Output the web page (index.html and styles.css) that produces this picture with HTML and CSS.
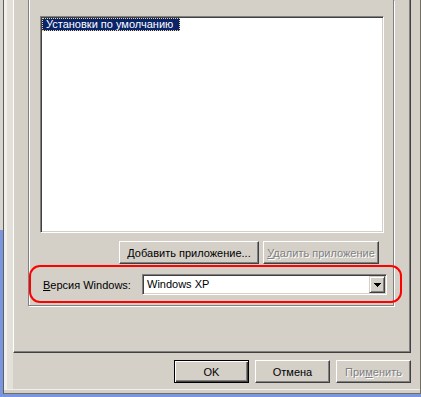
FILE: index.html
```html
<!DOCTYPE html>
<html lang="ru">
<head>
    <meta charset="UTF-8">
    <title>Совместимость</title>
    <link rel="stylesheet" href="styles.css">
</head>
<body>
    <div class="window">
        <div class="tab-page">
            <div class="group">
                <div class="listbox">
                    <div class="list-item selected">Установки по умолчанию</div>
                </div>

                <div class="list-actions">
                    <button class="btn btn-add"><u>Д</u>обавить приложение...</button>
                    <button class="btn btn-remove" disabled><u>У</u>далить приложение</button>
                </div>

                <div class="version-row">
                    <label class="version-label" for="winver"><u>В</u>ерсия Windows:</label>
                    <div class="combo" id="winver">
                        <span class="combo-text">Windows XP</span>
                        <span class="combo-button">
                            <svg width="7" height="4" viewBox="0 0 7 4" shape-rendering="crispEdges">
                                <path d="M0 0h7v1H0z M1 1h5v1H1z M2 2h3v1H2z M3 3h1v1H3z" fill="#000"/>
                            </svg>
                        </span>
                    </div>
                    <div class="highlight-ring"></div>
                </div>
            </div>
        </div>

        <div class="dialog-buttons">
            <button class="btn btn-default">OK</button>
            <button class="btn">Отмена</button>
            <button class="btn" disabled>При<u>м</u>енить</button>
        </div>
    </div>
</body>
</html>
```

FILE: styles.css
```css
* {
    box-sizing: border-box;
}
body {
    margin: 0;
    height: 397px;
    font-family: "Liberation Sans", Arial, sans-serif;
    font-size: 11px;
    color: #000;
    background: linear-gradient(#d8d5cf, #d8d5cf) 0 0 / 3px 230px no-repeat, #7a96df;
}
.window {
    width: 418px;
    height: 394px;
    margin-left: 3px;
    padding-left: 9px;
    border-left: 1px solid #5e5e5e;
    border-right: 1px solid #716f64;
    border-bottom: 1px solid #716f64;
    background: linear-gradient(to right, #f1efea 3px, #e3e0da 3px, #e3e0da 9px, #d4d0c8 9px);
    box-shadow: inset 0 -3px #d4d0c8, inset 0 -4px #f1efea;
}
.tab-page {
    width: 398px;
    height: 353px;
    padding-left: 14px;
    background-color: #d4d0c8;
    border-left: 1px solid #fff;
    border-right: 1px solid #404040;
    border-bottom: 1px solid #404040;
    box-shadow: inset -1px -1px #808080;
}
.group {
    position: relative;
    width: 366px;
    height: 306px;
    padding: 16px 0 0 11px;
    border: 1px solid #808080;
    border-top: 0;
    box-shadow: inset 1px 0 #fff, 1px 1px #fff;
}
.listbox {
    width: 344px;
    height: 217px;
    padding: 1px;
    background-color: #fff;
    border: 1px solid;
    border-color: #808080 #fff #fff #808080;
    box-shadow: inset 1px 1px #404040, inset -1px -1px #d4d0c8;
}
.list-item {
    width: 138px;
    height: 13px;
    padding-left: 3px;
    line-height: 11px;
    white-space: nowrap;
}
.list-item.selected {
    color: #fff;
    background-color: #0a246a;
    border: 1px dotted #f5d38a;
}
.list-actions {
    display: flex;
    justify-content: flex-end;
    gap: 4px;
    width: 344px;
    padding-right: 5px;
    margin-top: 8px;
}
.btn {
    height: 23px;
    padding: 0;
    font: inherit;
    color: #000;
    background-color: #d4d0c8;
    border: 1px solid;
    border-color: #fff #404040 #404040 #fff;
    box-shadow: inset -1px -1px #808080;
    white-space: nowrap;
}
.btn:disabled {
    color: #808080;
    text-shadow: 1px 1px #fff;
}
.btn-add {
    width: 140px;
}
.btn-remove {
    width: 116px;
}
.btn-default {
    border-color: #000;
    box-shadow: inset 1px 1px #fff, inset -1px -1px #404040, inset -2px -2px #808080;
}
.version-row {
    position: relative;
    display: flex;
    align-items: center;
    height: 21px;
    margin-top: 10px;
    padding-left: 3px;
}
.version-label {
    width: 99px;
}
.combo {
    display: flex;
    width: 245px;
    height: 21px;
    padding: 1px;
    background-color: #fff;
    border: 1px solid;
    border-color: #808080 #fff #fff #808080;
    box-shadow: inset 1px 1px #404040, inset -1px -1px #d4d0c8;
}
.combo-text {
    flex: 1;
    padding-left: 3px;
    line-height: 17px;
}
.combo-button {
    display: flex;
    align-items: center;
    justify-content: center;
    width: 16px;
    height: 17px;
    background-color: #d4d0c8;
    border: 1px solid;
    border-color: #d4d0c8 #404040 #404040 #d4d0c8;
    box-shadow: inset 1px 1px #fff, inset -1px -1px #808080;
}
.combo-button svg {
    display: block;
}
/* красная рамка-выделение поверх диалога */
.highlight-ring {
    position: absolute;
    top: -9px;
    left: -11px;
    width: 373px;
    height: 38px;
    border: 2px solid #f00;
    border-radius: 11px;
    pointer-events: none;
}
.dialog-buttons {
    display: flex;
    justify-content: flex-end;
    gap: 6px;
    width: 398px;
    margin-top: 7px;
}
.dialog-buttons .btn {
    width: 75px;
}
```
